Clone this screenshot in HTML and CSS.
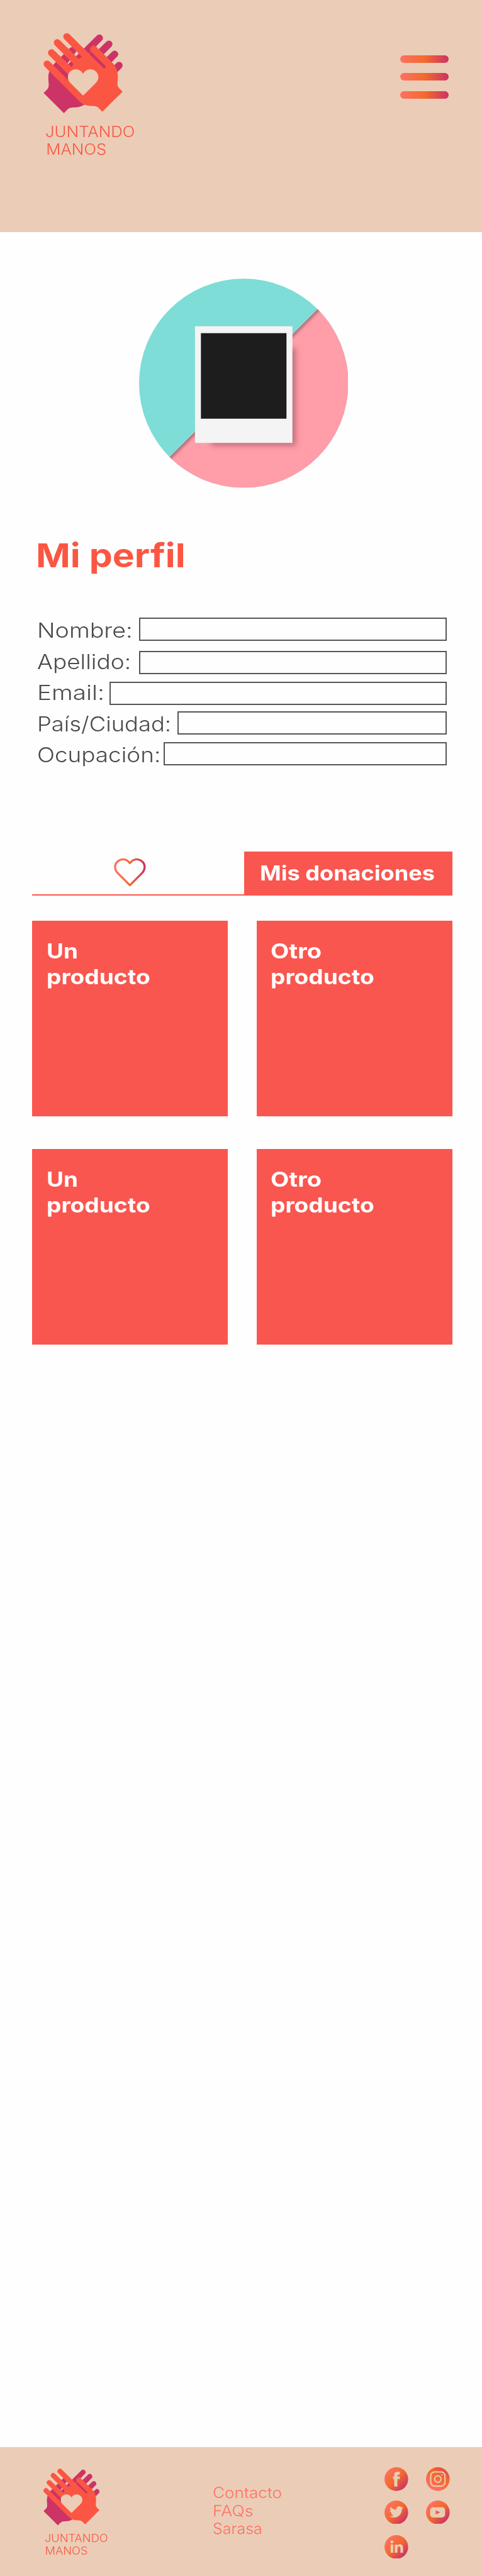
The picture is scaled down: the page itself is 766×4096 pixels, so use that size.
FILE: index.html
```html
<!DOCTYPE html>
<html lang="es">
<head>
<meta charset="utf-8">
<title>Juntando Manos – Mi perfil</title>
<link rel="stylesheet" href="styles.css">
</head>
<body>
<svg class="defs" aria-hidden="true">
  <defs>
    <linearGradient id="warm" x1="0" y1="0" x2="1" y2="0">
      <stop offset="0" stop-color="#ff7062"/><stop offset=".5" stop-color="#f36a2d"/><stop offset="1" stop-color="#cc3366"/>
    </linearGradient>
    <linearGradient id="warm-diag" x1=".12" y1=".15" x2=".85" y2=".88">
      <stop offset="0" stop-color="#ff7062"/><stop offset=".5" stop-color="#f36a2d"/><stop offset="1" stop-color="#cc3366"/>
    </linearGradient>
    <linearGradient id="warm-up" x1=".35" y1="1" x2="1.05" y2="-.15">
      <stop offset="0" stop-color="#ff7062"/><stop offset=".5" stop-color="#f36a2d"/><stop offset="1" stop-color="#cc3366"/>
    </linearGradient>
    <symbol id="hands" viewBox="72 68 464 472">
      <path fill="#cc3366" transform="matrix(-1 0 0 1 608 8)" d="M223.500 76L418 270L475 243L381 149L475 243C502 271 509 300 507 335C505 362 501 378 515 392L535 412L416 530L399 512C386 498 378 497 350 496C318 495 297 484 278 465L79 265A20.500 20.500 0 0 1 108 236L216 344V310L103 197A20.500 20.500 0 0 1 131 168L238 270L247 250L139 141A20.500 20.500 0 0 1 167 111L278 220L297 208L194 105A20.500 20.500 0 0 1 223.500 76ZM351 179A20.500 20.500 0 0 1 381 149L475 243L418 270Z"/>
      <path d="M345 183L432 272" stroke="#cc3366" stroke-width="22"/>
      <path fill="#fb5643" d="M223.500 76L419 271A8.500 8.500 0 0 0 434 261L351 179A20.500 20.500 0 0 1 381 149L475 243C502 271 509 300 507 335C505 362 501 378 515 392L535 412L416 530L399 512C386 498 378 497 350 496C318 495 297 484 278 465L79 265A20.500 20.500 0 0 1 108 236L216 344V310L103 197A20.500 20.500 0 0 1 131 168L238 270L247 250L139 141A20.500 20.500 0 0 1 167 111L278 220L297 208L194 105A20.500 20.500 0 0 1 223.500 76Z"/>
      <path fill="#ebcdb7" d="M304 435L229 361C216 347 213 329 217 314C228 276 284 268 304 308C324 268 380 276 391 314C396 330 392 347 379 361Z"/>
    </symbol>
  </defs>
</svg>

<header class="header">
  <a class="brand">
    <svg class="brand-mark"><use href="#hands"/></svg>
    <span class="brand-name"><span class="w-juntando">JUNTANDO</span><span class="w-manos">MANOS</span></span>
  </a>
  <div class="menu"><i></i><i></i><i></i></div>
</header>

<main class="main">
  <svg class="avatar" viewBox="0 0 406 406">
    <defs>
      <clipPath id="round"><circle cx="203" cy="203" r="203"/></clipPath>
      <clipPath id="lower"><path d="M406 0L0 406H406Z"/></clipPath>
      <filter id="soft" x="-20%" y="-20%" width="140%" height="140%"><feGaussianBlur stdDeviation="6"/></filter>
      <filter id="edge" x="-20%" y="-20%" width="140%" height="140%"><feGaussianBlur stdDeviation="2.500"/></filter>
    </defs>
    <g clip-path="url(#round)">
      <path fill="#7eddd6" d="M0 0H406V406H0Z"/>
      <path fill="#ff9da8" d="M406 0L0 406H406Z"/>
      <g clip-path="url(#lower)">
        <path d="M366 40L40 366" stroke="#7d4450" stroke-opacity=".6" stroke-width="8" filter="url(#edge)"/>
        <path fill="#b06470" fill-opacity=".8" d="M140 135H304V324H140Z" filter="url(#soft)"/>
      </g>
    </g>
    <path fill="#f4f4f4" d="M108.500 92.500H297.500V319H108.500Z"/>
    <path fill="#1d1d1d" d="M120 106H286V272H120Z"/>
  </svg>

  <h1 class="title"><span>Mi perfil</span></h1>

  <form class="form">
    <label class="row nombre"><span>Nombre:</span><input type="text"></label>
    <label class="row apellido"><span>Apellido:</span><input type="text"></label>
    <label class="row email"><span>Email:</span><input type="text"></label>
    <label class="row pais"><span>País/Ciudad:</span><input type="text"></label>
    <label class="row ocupacion"><span>Ocupación:</span><input type="text"></label>
  </form>

  <nav class="tabs">
    <a class="tab-fav">
      <svg class="heart" viewBox="0 0 62 54"><path fill="none" stroke="url(#warm)" stroke-width="4" stroke-linejoin="round" d="M31 52L7 28C1 22 1 12 6 7C13 0 23 0 29 7L31 9L33 7C39 0 49 0 56 7C61 12 61 22 55 28Z"/></svg>
    </a>
    <a class="tab-active"><span>Mis donaciones</span></a>
  </nav>

  <section class="cards">
    <article class="card"><span class="w-un">Un</span><span class="w-prod">producto</span></article>
    <article class="card other"><span class="w-otro">Otro</span><span class="w-prod">producto</span></article>
    <article class="card"><span class="w-un">Un</span><span class="w-prod">producto</span></article>
    <article class="card other"><span class="w-otro">Otro</span><span class="w-prod">producto</span></article>
  </section>
</main>

<footer class="footer">
  <a class="brand small">
    <svg class="brand-mark"><use href="#hands"/></svg>
    <span class="brand-name"><span class="w-juntando">JUNTANDO</span><span class="w-manos">MANOS</span></span>
  </a>
  <nav class="links"><a class="w-contacto">Contacto</a><a class="w-faqs">FAQs</a><a class="w-sarasa">Sarasa</a></nav>
  <div class="social">
    <svg viewBox="0 0 46 46"><circle cx="23" cy="23" r="23" fill="url(#warm-diag)"/><path fill="#ebcdb7" d="M19 37.500V23H16.500V18H19V15.500C19 11 21.500 9 25.500 9H29.800V14.300H27.200C25.700 14.300 25 15 25 16.300V18H30L29.400 23H25V37.500Z"/></svg>
    <svg viewBox="0 0 46 46"><circle cx="23" cy="23" r="23" fill="url(#warm-up)"/><g fill="none" stroke="#ebcdb7" stroke-width="2.500"><rect x="9.200" y="9.200" width="27.600" height="27.600" rx="7.500"/><circle cx="23" cy="23" r="6.200"/></g><circle cx="31" cy="15" r="1.300" fill="#ebcdb7"/></svg>
    <svg viewBox="0 0 46 46"><circle cx="23" cy="23" r="23" fill="url(#warm-diag)"/><path fill="#ebcdb7" transform="translate(9.700 8.700) scale(1.120)" d="M23.953 4.570a10 10 0 01-2.825.775 4.958 4.958 0 002.163-2.723c-.951.555-2.005.959-3.127 1.184a4.920 4.920 0 00-8.384 4.482C7.690 8.095 4.067 6.130 1.640 3.162a4.822 4.822 0 00-.666 2.475c0 1.710.870 3.213 2.188 4.096a4.904 4.904 0 01-2.228-.616v.060a4.923 4.923 0 003.946 4.827 4.996 4.996 0 01-2.212.085 4.936 4.936 0 004.604 3.417 9.867 9.867 0 01-6.102 2.105c-.390 0-.779-.023-1.170-.067a13.995 13.995 0 007.557 2.209c9.053 0 13.998-7.496 13.998-13.985 0-.210 0-.420-.015-.630A9.935 9.935 0 0024 4.590z"/></svg>
    <svg viewBox="0 0 46 46"><circle cx="23" cy="23" r="23" fill="url(#warm-diag)"/><rect x="8" y="13" width="29" height="20" rx="6" fill="#ebcdb7"/><path fill="#e95f3e" d="M19 18.800V27.200L27.500 23Z"/></svg>
    <svg viewBox="0 0 46 46" class="last"><circle cx="23" cy="23" r="23" fill="url(#warm-diag)"/><g fill="#ebcdb7"><circle cx="14.500" cy="13.300" r="2.800"/><rect x="12" y="18.200" width="5" height="16"/><path d="M20 18.200H25V20.300C26 18.700 27.700 17.800 30 17.800C34.500 17.800 36 20.500 36 25V34.200H31V25.800C31 23.300 30.300 22 28.300 22C26 22 25.200 23.500 25.200 25.800V34.200H20Z"/></g></svg>
  </div>
</footer>
</body>
</html>
```
FILE: styles.css
```css
/* 1rem = ten design pixels, scaled to the page width */
html { font-size: 8.192px; }
* { box-sizing: border-box; }
body {
  margin: 0;
  width: 766px;
  height: 4096px;
  display: flex;
  flex-direction: column;
  background: #fefefe;
  font-family: Inter, "Open Sans", sans-serif;
  font-weight: 300;
  overflow: hidden;
}
svg { display: block; flex: none; }
.defs { position: absolute; width: 0; height: 0; }

.header {
  height: 45rem;
  padding: 6.300rem 6.500rem 0 8.430rem;
  display: flex;
  justify-content: space-between;
  align-items: flex-start;
  background: #ebcdb7;
}
.brand { display: block; color: #fb5643; }
.brand-mark { width: 15.400rem; height: 15.700rem; }
.brand-name {
  display: block;
  padding: 1.900rem 0 0 .350rem;
  font-size: 2.890rem;
  line-height: 3.500rem;
}
.brand-name span { display: block; white-space: nowrap; }
.brand-name .w-manos { padding-left: .140rem; }
.menu {
  width: 9.400rem;
  margin-top: 4.400rem;
  display: grid;
  gap: 2rem;
}
.menu i {
  height: 1.480rem;
  border-radius: .740rem;
  background: linear-gradient(90deg, #ff7062, #f36a2d 50%, #cc3366);
}

.main { flex: 1; padding: 9.100rem 5.600rem 0 6.250rem; }
.avatar { width: 40.600rem; height: 40.600rem; margin-left: 20.680rem; }

.title {
  margin: 9.700rem 0 0 .700rem;
  font-size: 6.430rem;
  line-height: 7rem;
  font-weight: 700;
  color: #fb5643;
}
.title span { display: block; }

.form { margin: 8rem 1.200rem 0 1rem; color: #4a4a4a; }
.row {
  display: flex;
  align-items: flex-start;
  height: 6.050rem;
  font-size: 4.020rem;
  line-height: 6.050rem;
}
.row span { flex: none; white-space: nowrap; }
.row input {
  flex: 1;
  min-width: 0;
  height: 4.550rem;
  padding: 0;
  border: 2px solid #555;
  border-radius: 0;
  background: transparent;
}
.nombre span, .apellido span { width: 19.750rem; }
.email span { width: 13.950rem; }
.pais span { width: 27.200rem; }
.ocupacion span { width: 24.450rem; }
.nombre input { margin-top: .480rem; }
.apellido input { margin-top: .840rem; }
.email input { margin-top: .810rem; }
.pais input { margin-top: .520rem; }
.ocupacion input { margin-top: .400rem; }

.tabs {
  display: flex;
  height: 8.570rem;
  margin: 15.600rem .150rem 0 0;
  border-bottom: 2px solid #f9564f;
}
.tab-fav { flex: 1; padding: 1.400rem 0 0 15.850rem; }
.heart { width: 6.200rem; height: 5.400rem; }
.tab-active {
  width: 40.350rem;
  padding-left: 3.050rem;
  background: #f9564f;
  color: #fff;
  font-size: 4.020rem;
  line-height: 8.500rem;
  font-weight: 700;
  white-space: nowrap;
}
.tab-active span { display: block; }

.cards {
  display: grid;
  grid-template-columns: 37.950rem 37.950rem;
  grid-auto-rows: 37.950rem;
  gap: 6.400rem 5.650rem;
  margin-top: 4.900rem;
}
.card {
  padding: 3.420rem 0 0 2.740rem;
  background: #f9564f;
  color: #fff;
  font-size: 4.020rem;
  line-height: 4.960rem;
  font-weight: 700;
}
.card.other { padding-left: 2.630rem; }
.card span { display: block; white-space: nowrap; }

.footer {
  display: flex;
  align-items: flex-start;
  height: 25.050rem;
  background: #ebcdb7;
}
.small { width: 32.870rem; margin: 4.150rem 0 0 8.430rem; }
.small .brand-mark { width: 10.900rem; height: 11.100rem; }
.small .brand-name { padding: 1.370rem 0 0 .240rem; font-size: 2.060rem; line-height: 2.420rem; }
.small .brand-name .w-manos { padding-left: .070rem; }
.links {
  display: grid;
  width: 33.330rem;
  margin-top: 7.230rem;
  font-size: 2.890rem;
  line-height: 3.500rem;
  color: #ff7062;
}
.social {
  display: grid;
  grid-template-columns: 4.600rem 4.600rem;
  gap: 1.800rem 3.400rem;
  margin-top: 3.950rem;
}
.social svg { width: 4.600rem; height: 4.600rem; }
.social .last { margin-top: .330rem; }

/* Wide letterforms */
.brand-name span, .title span, .row span, .tab-active span, .card span, .links a {
  transform-origin: 0 50%;
  transform: scaleX(var(--wide, 1.100));
}
.w-juntando, .w-manos { --wide: 1.090; }
.small .w-juntando, .small .w-manos { --wide: 1.080; }
.title { --wide: 1.117; }
.nombre { --wide: 1.143; }
.apellido { --wide: 1.123; }
.email { --wide: 1.174; }
.pais { --wide: 1.104; }
.ocupacion { --wide: 1.120; }
.tab-active { --wide: 1.097; }
.w-un { --wide: 1.117; }
.w-prod { --wide: 1.127; }
.w-otro { --wide: 1.155; }
.w-contacto { --wide: 1.106; }
.w-faqs { --wide: 1.130; }
.w-sarasa { --wide: 1.056; }
```
